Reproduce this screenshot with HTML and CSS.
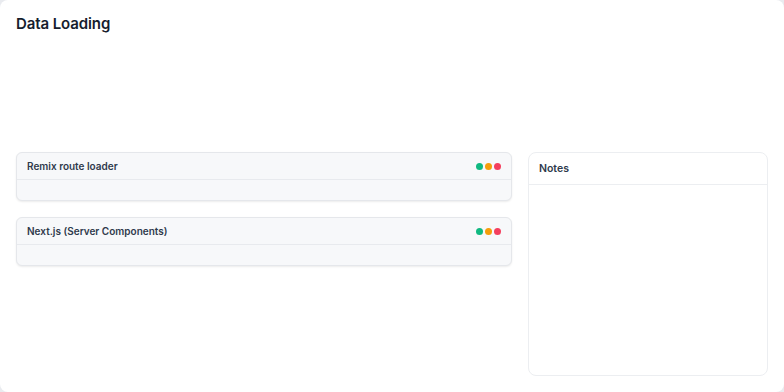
FILE: index.html
```html
<!DOCTYPE html>
<html lang="en">
<head>
  <meta charset="UTF-8">
  <meta name="viewport" content="width=device-width, initial-scale=1.0">
  <title>Data Loading</title>
  <link rel="stylesheet" href="styles.css">
</head>
<body>
  <div class="page">
    <h1 class="page-title">Data Loading</h1>

    <div class="layout">
      <div class="examples">
        <div class="example-card">
          <div class="example-header">
            <span class="example-title">Remix route loader</span>
            <span class="dots">
              <span class="dot dot-green"></span>
              <span class="dot dot-amber"></span>
              <span class="dot dot-red"></span>
            </span>
          </div>
          <div class="example-body"></div>
        </div>

        <div class="example-card">
          <div class="example-header">
            <span class="example-title">Next.js (Server Components)</span>
            <span class="dots">
              <span class="dot dot-green"></span>
              <span class="dot dot-amber"></span>
              <span class="dot dot-red"></span>
            </span>
          </div>
          <div class="example-body"></div>
        </div>
      </div>

      <div class="notes">
        <div class="notes-header">Notes</div>
        <div class="notes-body"></div>
      </div>
    </div>
  </div>
</body>
</html>
```

FILE: styles.css
```css
html, body {
  height: 100%;
}

body {
  margin: 0;
  font-family: Inter, 'Noto Sans', sans-serif;
  background-color: #e9ebef;
  color: #1f2937;
}

.page {
  box-sizing: border-box;
  height: 100%;
  display: flex;
  flex-direction: column;
  padding: 14px 16px 16px;
  background-color: #fff;
  border-radius: 8px;
}

.page-title {
  margin: 0;
  font-size: 15px;
  line-height: 20px;
  font-weight: 600;
  color: #161d2e;
  letter-spacing: -0.1px;
}

.layout {
  flex: 1;
  display: grid;
  grid-template-columns: 1fr 240px;
  gap: 16px;
  margin-top: 118px;
  min-height: 0;
}

.examples {
  display: flex;
  flex-direction: column;
  gap: 16px;
}

.example-card {
  background-color: #f7f8fa;
  border: 1px solid #e5e7eb;
  border-radius: 6px;
  box-shadow: 0 1px 2px rgba(0, 0, 0, 0.08);
}

.example-header {
  display: flex;
  align-items: center;
  justify-content: space-between;
  height: 26px;
  padding: 0 10px;
  border-bottom: 1px solid #e8eaee;
}

.example-title {
  font-size: 10px;
  font-weight: 600;
  color: #2f3a4c;
}

.dots {
  display: flex;
  gap: 2px;
}

.dot {
  width: 7px;
  height: 7px;
  border-radius: 50%;
}

.dot-green {
  background-color: #10b981;
}

.dot-amber {
  background-color: #f59e0b;
}

.dot-red {
  background-color: #f43f5e;
}

.example-body {
  height: 20px;
}

.notes {
  display: flex;
  flex-direction: column;
  background-color: #fff;
  border: 1px solid #eceef1;
  border-radius: 8px;
}

.notes-header {
  height: 31px;
  line-height: 31px;
  padding: 0 10px;
  font-size: 10.5px;
  font-weight: 600;
  color: #2f3a4c;
  border-bottom: 1px solid #eceef1;
}

.notes-body {
  flex: 1;
}
```
